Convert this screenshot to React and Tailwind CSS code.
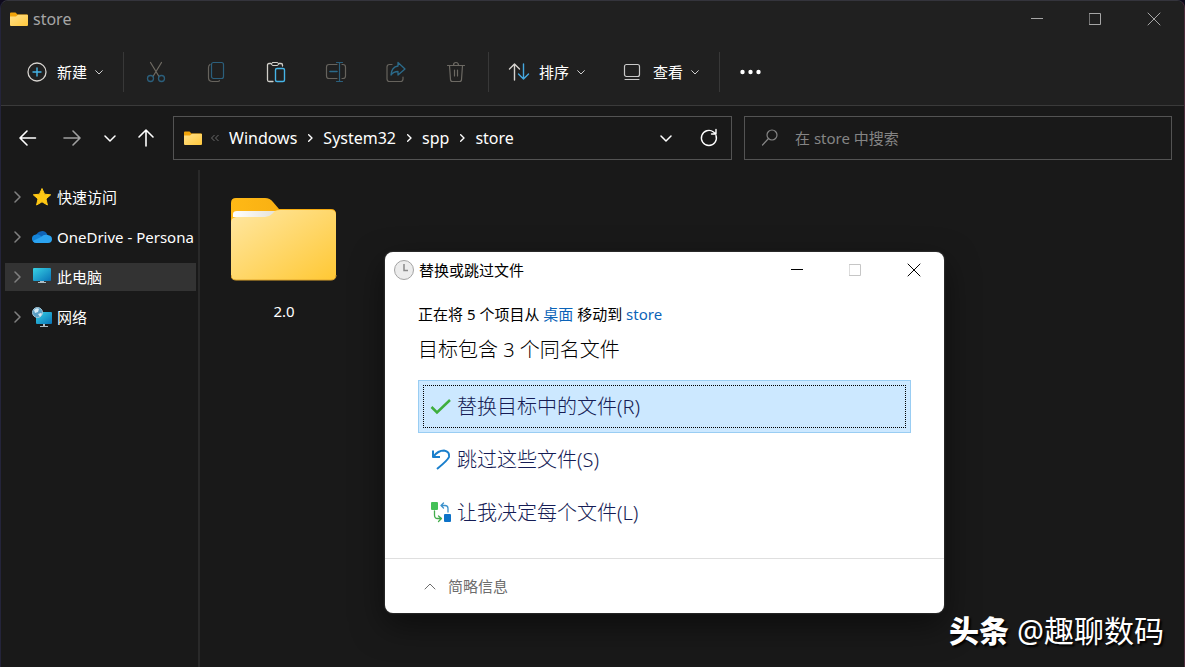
import React from 'react';

const FolderIcon = ({ className }) => (
  <svg viewBox="0 0 18 15" className={className} aria-hidden="true">
    <defs>
      <linearGradient id="folder-sm" x1="0" y1="0" x2="1" y2="1">
        <stop offset="0" stopColor="#ffe08a" />
        <stop offset="1" stopColor="#ffc83c" />
      </linearGradient>
    </defs>
    <path d="M0 1.5Q0 .5 1 .5h4.5l2 2H17q1 0 1 1V8H0z" fill="#f0a30a" />
    <path d="M0 4.5h6L8 2.8h9q1 0 1 1V13q0 1-1 1H1q-1 0-1-1z" fill="url(#folder-sm)" />
  </svg>
);

const LargeFolderIcon = () => (
  <svg viewBox="0 0 106 84" className="h-[84px] w-[106px]" aria-hidden="true">
    <defs>
      <linearGradient id="folder-lg" x1="0" y1="0" x2="1" y2="1">
        <stop offset="0" stopColor="#ffe7a2" />
        <stop offset="1" stopColor="#ffc834" />
      </linearGradient>
      <linearGradient id="folder-tab" x1="0" y1="0" x2="1" y2="0">
        <stop offset="0" stopColor="#ffb916" />
        <stop offset="1" stopColor="#f2a60e" />
      </linearGradient>
      <linearGradient id="folder-paper" x1="0" y1="0" x2="1" y2="0">
        <stop offset="0" stopColor="#ffffff" />
        <stop offset="1" stopColor="#e4e1d6" />
      </linearGradient>
    </defs>
    <path d="M0 6q0-5 5-5h29q5 0 8 4l6 7h52q5 0 5 5v20H0z" fill="url(#folder-tab)" />
    <path d="M2 17q0-3 4-3h41l-4 6H2z" fill="url(#folder-paper)" />
    <path d="M0 25q0-4 5-5h29q4 0 7-3l3-3q2-1 5-1h51q5 0 5 5v60q0 5-5 5H5q-5 0-5-5z" fill="url(#folder-lg)" />
    <path d="M0 78q0 5 5 5h95q5 0 5-5" fill="none" stroke="#dfa52c" />
  </svg>
);

const Chevron = ({ d, className }) => (
  <svg viewBox="0 0 12 12" className={className} fill="none" stroke="currentColor" strokeLinecap="round" strokeLinejoin="round" aria-hidden="true">
    <path d={d} />
  </svg>
);

const DOWN = 'M1 4l5 5 5-5';
const RIGHT = 'M4 1l5 5-5 5';
const UP = 'M1 9l5-5 5 5';

const Glyph = ({ children }) => (
  <svg viewBox="0 0 24 24" className="h-6 w-6" fill="none" stroke="currentColor" strokeLinecap="round" strokeLinejoin="round" aria-hidden="true">
    {children}
  </svg>
);

const tools = [
  {
    label: '剪切',
    icon: (
      <Glyph>
        <path d="M6.5 2.5l8.5 14M17.5 2.5L9 16.5" stroke="#6f6b63" strokeWidth="1.2" />
        <circle cx="6.5" cy="18.5" r="3" stroke="#2b5f7c" strokeWidth="1.3" />
        <circle cx="17.5" cy="18.5" r="3" stroke="#2b5f7c" strokeWidth="1.3" />
      </Glyph>
    ),
  },
  {
    label: '复制',
    icon: (
      <Glyph>
        <path d="M6 4.5q-1.5 1-1.5 3v10q0 4 4 4h5q2 0 2-1" stroke="#66635d" strokeWidth="1.2" />
        <rect x="7.5" y="2.5" width="12" height="16" rx="2" stroke="#2b5f7c" strokeWidth="1.2" />
      </Glyph>
    ),
  },
  {
    label: '粘贴',
    icon: (
      <Glyph>
        <path d="M7 3.5H5q-1.5 0-1.5 1.5v15q0 1.5 1.5 1.5h4M15 3.5h2q1.5 0 1.5 1.5v1" stroke="#d0cec9" strokeWidth="1.3" />
        <rect x="7.5" y="2.5" width="7" height="3" rx="1.5" stroke="#d0cec9" />
        <rect x="11.5" y="8.5" width="9" height="13" rx="1.5" stroke="#45b4e7" strokeWidth="1.4" />
      </Glyph>
    ),
  },
  {
    label: '重命名',
    icon: (
      <Glyph>
        <path d="M13 4.5H5Q2.500 4.500 2.500 7v9q0 2.500 2.500 2.500h8M18 4.500h1q2.500 0 2.500 2.500v9q0 2.500-2.500 2.500h-1" stroke="#66635d" strokeWidth="1.2" />
        <path d="M6 11.5h7" stroke="#2b6a8a" strokeWidth="1.6" />
        <path d="M12.5 2.5h6M12.5 21.5h6M15.5 2.5v19" stroke="#2b5f7c" strokeWidth="1.2" />
      </Glyph>
    ),
  },
  {
    label: '共享',
    icon: (
      <Glyph>
        <path d="M8 4.5H5.5Q3 4.5 3 7v12q0 2.500 2.500 2.500h11Q19 21.500 19 19v-2" stroke="#66635d" strokeWidth="1.2" />
        <path d="M14 2.5L21 9l-7 6v-3.5q-4.500 0-7 3.500.5-8 7-9z" stroke="#2b6a8a" strokeWidth="1.3" />
      </Glyph>
    ),
  },
  {
    label: '删除',
    icon: (
      <Glyph>
        <path d="M3.5 5.5h17M5.5 5.5l1 14q0 2 2 2h7q2 0 2-2l1-14M9.5 5.5q0-3 2.500-3t2.500 3M10.5 10v6M13.5 10v6" stroke="#6c6963" strokeWidth="1.2" />
      </Glyph>
    ),
  },
];

const StarIcon = () => (
  <svg viewBox="0 0 20 20" className="h-5 w-5" aria-hidden="true">
    <path d="M10 1.5l2.5 5.7 6.2.6-4.7 4.1 1.4 6.100-5.400-3.200L4.600 18 6 11.900 1.300 7.800l6.200-.6z" fill="#ffc814" stroke="#ffc814" strokeLinejoin="round" />
  </svg>
);

const CloudIcon = () => (
  <svg viewBox="0 0 20 20" className="h-5 w-5" aria-hidden="true">
    <path d="M4 9a6 6 0 0 1 11.5-1L12 14H3z" fill="#0f64b8" />
    <path d="M4.5 16a4.3 4.3 0 0 1-.5-8.600q2.500-.4 5 1.500l5 4z" fill="#1484d8" />
    <path d="M9 10q3-3 6.5-2 4.500.5 4.500 4.200T16 16H4.500Q2 16 .8 14z" fill="#2ba3f0" />
  </svg>
);

const PcIcon = () => (
  <svg viewBox="0 0 20 20" className="h-5 w-5" aria-hidden="true">
    <defs>
      <linearGradient id="screen" x1="0" y1="0" x2="1" y2="1">
        <stop offset="0" stopColor="#38d2e4" />
        <stop offset="1" stopColor="#0873b8" />
      </linearGradient>
    </defs>
    <rect x="1" y="1" width="18" height="13" rx="1" fill="url(#screen)" />
    <path d="M8 14h4v1h2v1H6v-1h2z" fill="#aebdc5" />
  </svg>
);

const NetworkIcon = () => (
  <svg viewBox="0 0 20 20" className="h-5 w-5" aria-hidden="true">
    <rect x="4" y="5" width="16" height="12" rx="1" fill="url(#screen)" />
    <path d="M11 17h2v2h3v1H8v-1h3z" fill="#aebdc5" />
    <circle cx="5.5" cy="5.5" r="5" fill="#5b9fc4" stroke="#a2c8db" />
    <path d="M2 3q3-3 5-1L6 5 3 6zM6 7l3-1 1 1-2 3z" fill="#d7ebf4" />
  </svg>
);

const places = [
  { name: '快速访问', icon: <StarIcon /> },
  { name: 'OneDrive - Persona', icon: <CloudIcon /> },
  { name: '此电脑', icon: <PcIcon />, active: true },
  { name: '网络', icon: <NetworkIcon /> },
];

const crumbs = ['Windows', 'System32', 'spp', 'store'];

const WindowControls = ({ maxClass = '' }) => (
  <>
    <button type="button" aria-label="最小化" className="flex h-9 w-[58px] items-center justify-center">
      <Chevron d="M0 5.5h12" className="h-3 w-3" />
    </button>
    <button type="button" aria-label="最大化" className={`flex h-9 w-[58px] items-center justify-center ${maxClass}`}>
      <Chevron d="M.5.5h11v11H.5z" className="h-3 w-3" />
    </button>
    <button type="button" aria-label="关闭" className="flex h-9 w-[60px] items-center justify-center">
      <Chevron d="M0 0l12 12M12 0L0 12" className="h-3 w-3 overflow-visible" />
    </button>
  </>
);

const MenuButton = ({ label, children }) => (
  <button type="button" className="flex items-center gap-2">
    <Glyph>{children}</Glyph>
    <span>{label}</span>
    <Chevron d={DOWN} className="h-2 w-2 stroke-[1.5] text-[#d0d0d0]" />
  </button>
);

const Divider = () => <span className="h-10 w-px bg-[#383838]" />;

const Toolbar = () => (
  <div className="flex h-[67px] items-center gap-5 border-b border-[#3a3a3a] pl-6 text-white">
    <MenuButton label="新建">
      <circle cx="12" cy="12" r="9" stroke="#d6d3cf" strokeWidth="1.3" />
      <path d="M12 8v8M8 12h8" stroke="#45b4e7" strokeWidth="1.4" />
    </MenuButton>
    <Divider />
    <div className="flex gap-9">
      {tools.map((tool) => (
        <button key={tool.label} type="button" aria-label={tool.label}>
          {tool.icon}
        </button>
      ))}
    </div>
    <Divider />
    <div className="-ml-0.5 flex gap-9">
      <MenuButton label="排序">
        <path d="M7.5 20V4M2.5 9l5-5 5 5" stroke="#d6d3cf" strokeWidth="1.4" />
        <path d="M16.5 4v15M11.5 14l5 5 5-5" stroke="#45a8e0" strokeWidth="1.4" />
      </MenuButton>
      <MenuButton label="查看">
        <rect x="3.5" y="4.5" width="15" height="12" rx="2" stroke="#c8c8c8" strokeWidth="1.2" />
        <path d="M4 19.5h14" stroke="#c8c8c8" />
      </MenuButton>
    </div>
    <Divider />
    <button type="button" aria-label="查看更多">
      <Glyph>
        <g fill="currentColor" stroke="none">
          <circle cx="2.5" cy="12" r="2.2" />
          <circle cx="10.5" cy="12" r="2.2" />
          <circle cx="18.5" cy="12" r="2.2" />
        </g>
      </Glyph>
    </button>
  </div>
);

const AddressRow = () => (
  <div className="flex h-16 items-center pr-3 pl-[15px] text-white">
    <button type="button" aria-label="后退">
      <Glyph><path d="M19.5 12h-15M11 5l-7 7 7 7" strokeWidth="1.6" /></Glyph>
    </button>
    <button type="button" aria-label="前进" className="ml-5 text-[#a0a0a0]">
      <Glyph><path d="M4 12h15M13 5l7 7-7 7" strokeWidth="1.6" /></Glyph>
    </button>
    <button type="button" aria-label="最近浏览的位置" className="ml-5">
      <Chevron d={DOWN} className="h-3 w-3 stroke-[1.5]" />
    </button>
    <button type="button" aria-label="上移" className="ml-[18px]">
      <Glyph><path d="M12 20V4.5M5 11l7-7 7 7" strokeWidth="1.6" /></Glyph>
    </button>
    <nav aria-label="路径" className="ml-[15px] flex h-11 min-w-0 flex-1 items-center border border-[#535353] pr-2.5 pl-2.5">
      <FolderIcon className="h-[15px] w-[18px]" />
      <svg viewBox="0 0 10 8" className="ml-2 h-2 w-2.5" fill="none" stroke="#6b6b6b" aria-hidden="true">
        <path d="M4.5 1l-3 3 3 3M8.5 1l-3 3 3 3" />
      </svg>
      <div className="ml-[9px] flex items-center gap-[9px] text-base leading-6">
        {crumbs.map((crumb, index) => (
          <React.Fragment key={crumb}>
            {index > 0 && <Chevron d={RIGHT} className="h-2 w-2 stroke-2" />}
            <a href="#">{crumb}</a>
          </React.Fragment>
        ))}
      </div>
      <button type="button" aria-label="以前的位置" className="ml-auto">
        <Chevron d={DOWN} className="h-3 w-3 stroke-[1.5]" />
      </button>
      <button type="button" aria-label="刷新" className="ml-[25px]">
        <Glyph>
          <path d="M19 9.5A7.5 7.5 0 1 1 16.500 6l2 1.800M19 3.500V8h-4.500" strokeWidth="1.4" />
        </Glyph>
      </button>
    </nav>
    <label className="ml-3 flex h-11 w-[428px] items-center border border-[#535353] pl-[13px] text-[#858585]">
      <Glyph>
        <circle cx="14" cy="9" r="5" strokeWidth="1.2" />
        <path d="M10.5 12.5L4.5 19" strokeWidth="1.2" />
      </Glyph>
      <input type="text" aria-label="搜索" placeholder="在 store 中搜索" className="ml-[13px] min-w-0 flex-1 bg-transparent outline-none placeholder:text-[#858585]" />
    </label>
  </div>
);

const Sidebar = () => (
  <nav aria-label="导航窗格" className="w-[199px] shrink-0 border-r-2 border-[#292929] pt-[13px] pr-0.5 pl-1 text-white">
    <ul className="flex flex-col gap-3">
      {places.map((place) => (
        <li key={place.name}>
          <a
            href="#"
            className={`flex h-7 items-center overflow-hidden pl-1.5 whitespace-nowrap ${place.active ? 'bg-[#333333]' : ''}`}
          >
            <Chevron d={RIGHT} className="h-3 w-3 shrink-0 stroke-[1.5] text-[#808080]" />
            <span className="ml-[9px] shrink-0">{place.icon}</span>
            <span className="ml-[5px]">{place.name}</span>
          </a>
        </li>
      ))}
    </ul>
  </nav>
);

const choices = [
  {
    label: '替换目标中的文件(R)',
    selected: true,
    icon: <path d="M2.5 12L8 17.500 21 5" stroke="#3fae3d" strokeWidth="2.5" strokeLinecap="butt" strokeLinejoin="miter" />,
  },
  {
    label: '跳过这些文件(S)',
    icon: <path d="M4 2.5V9h7M4.500 8.500Q9 2.500 15 2.500q6 1 5 6.500-1 3-12 12" stroke="#1a7fcc" strokeWidth="2" strokeLinecap="butt" />,
  },
  {
    label: '让我决定每个文件(L)',
    icon: (
      <>
        <rect x="2" y="1" width="7" height="8" rx="1" fill="#43c057" stroke="none" />
        <rect x="15" y="13" width="7" height="8" rx="1" fill="#0c72c8" stroke="none" />
        <path d="M12 4.5h4q3 0 3 3V11M14.5 2L12 4.5 14.5 7" stroke="#3c91cc" strokeWidth="1.3" />
        <path d="M5.5 10v4q0 3.500 3 3.500H12M9.5 15l3 2.500-3 3" stroke="#43ac4c" strokeWidth="1.3" />
      </>
    ),
  },
];

const ReplaceDialog = () => (
  <section
    role="dialog"
    aria-labelledby="dialog-title"
    className="absolute top-[251px] left-[384px] w-[559px] overflow-hidden rounded-lg bg-white text-black shadow-[0_0_2px_#606060,0_12px_32px_#00000080]"
  >
    <header className="flex h-9 items-center pl-2">
      <svg viewBox="0 0 22 22" className="h-[22px] w-[22px]" fill="none" aria-hidden="true">
        <circle cx="11" cy="11" r="9.5" fill="#ececec" stroke="#a3a3a3" />
        <path d="M11 5v6.5h4" stroke="#8a8a8a" strokeWidth="1.5" />
      </svg>
      <h2 id="dialog-title" className="ml-1 flex-1">替换或跳过文件</h2>
      <WindowControls maxClass="text-[#c6c6c6]" />
    </header>
    <div className="px-[33px] pt-4 pb-[19px]">
      <p className="leading-5">
        正在将 5 个项目从 <a href="#" className="text-[#0b63b8]">桌面</a> 移动到 <a href="#" className="text-[#0b63b8]">store</a>
      </p>
      <h3 className="mt-2.5 text-xl leading-8 font-light">目标包含 3 个同名文件</h3>
      <div className="mt-3.5">
        {choices.map((choice) => (
          <button
            key={choice.label}
            type="button"
            className={`block w-full border p-1 text-left text-xl font-light text-[#151c55] ${choice.selected ? 'border-[#99cdf3] bg-[#cce8ff]' : 'border-transparent'}`}
          >
            <span
              className={`flex h-[43px] items-center border border-dotted pl-[5px] ${choice.selected ? 'border-black' : 'border-transparent'}`}
            >
              <Glyph>{choice.icon}</Glyph>
              <span className="ml-1">{choice.label}</span>
            </span>
          </button>
        ))}
      </div>
    </div>
    <footer className="flex h-[55px] items-center border-t border-[#dfdfdf] pl-[39px] text-[#6d6d6d]">
      <button type="button" className="flex items-center">
        <Chevron d={UP} className="h-3 w-3" />
        <span className="ml-3">简略信息</span>
      </button>
    </footer>
  </section>
);

const App = () => (
  <div className="flex min-h-screen flex-col bg-[#0e0a1c] font-['Noto_Sans','Noto_Sans_CJK_SC',sans-serif] text-[15px] leading-6">
    <div className="relative flex flex-1 flex-col overflow-hidden rounded-t-lg border-x border-t border-t-[#34343c] border-r-[#4c2c3c] border-l-[#24243a] bg-[#191919]">
      <div className="bg-[#202020]">
        <header className="flex h-[38px] items-start pl-[9px] text-[#a6a6a6]">
          <FolderIcon className="mt-[11px] h-[15px] w-[18px]" />
          <h1 className="mt-1.5 ml-[5px] flex-1 text-base leading-6">store</h1>
          <WindowControls />
        </header>
        <Toolbar />
      </div>
      <AddressRow />
      <div className="flex flex-1">
        <Sidebar />
        <main className="pt-[27px] pl-[31px]">
          <figure className="flex flex-col items-center text-white">
            <LargeFolderIcon />
            <figcaption className="mt-[18px]">2.0</figcaption>
          </figure>
        </main>
      </div>
      <ReplaceDialog />
      <p className="absolute right-5 bottom-4 flex items-center gap-2 text-[30px] leading-10 text-white [text-shadow:2px_2px_2px_#000000]">
        <span className="font-black">头条</span>
        <span>@趣聊数码</span>
      </p>
    </div>
  </div>
);

export default App;
